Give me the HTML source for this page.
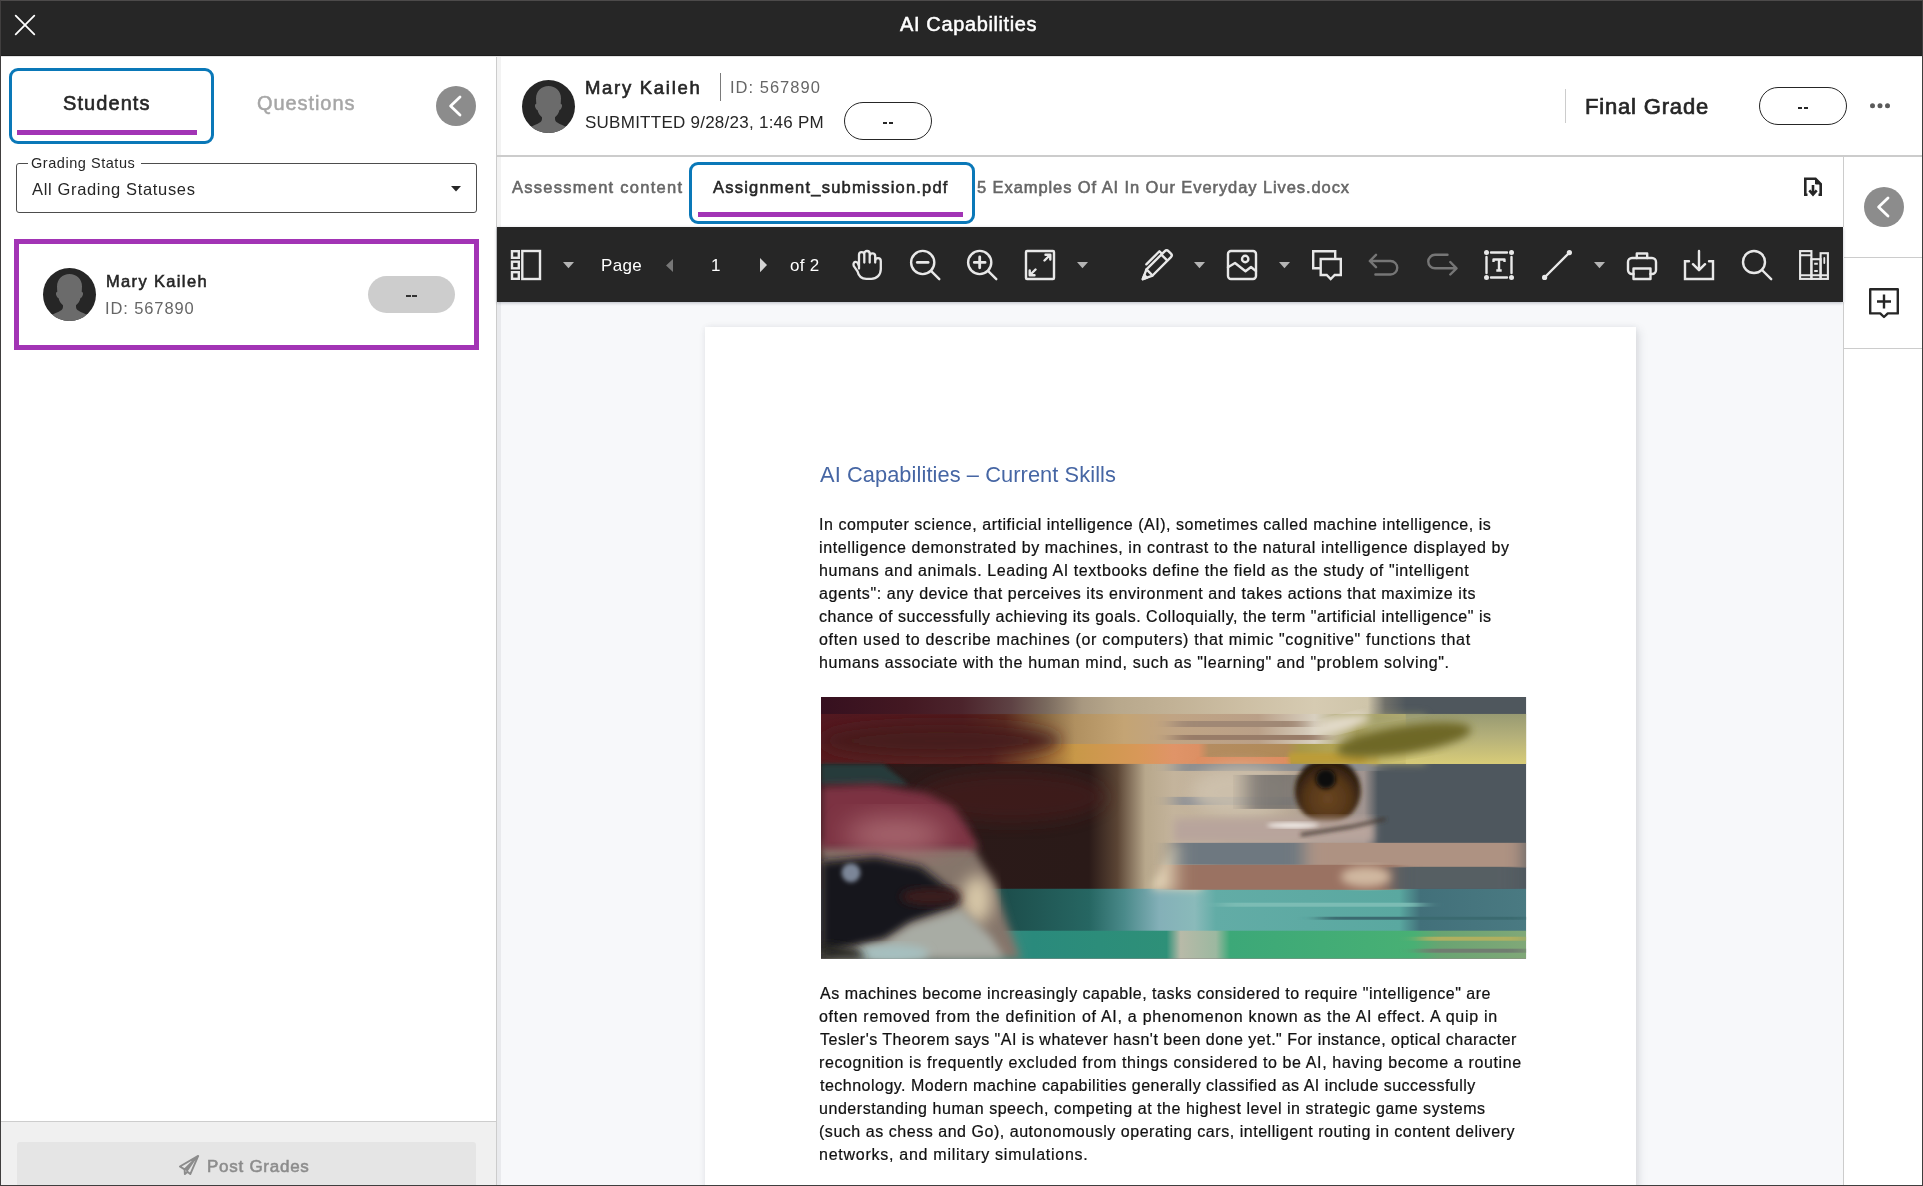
<!DOCTYPE html>
<html lang="en">
<head>
<meta charset="utf-8">
<title>AI Capabilities</title>
<style>
*{box-sizing:border-box;margin:0;padding:0}
html,body{width:1923px;height:1186px;overflow:hidden;background:#fff}
body{font-family:"Liberation Sans","DejaVu Sans",sans-serif;color:#262626;position:relative}
.a{position:absolute}
.t{position:absolute;white-space:pre;line-height:1;will-change:transform}
svg{position:absolute;overflow:visible}
.ic{fill:none;stroke:#e8e8e8;stroke-width:2.400;stroke-linecap:round;stroke-linejoin:round}
</style>
</head>
<body>

<div class="a" style="left:0;top:0;width:1923px;height:56px;background:#262626;border-bottom:1px solid #1b1b1b"></div>
<svg style="left:15px;top:15px" width="20" height="20" viewBox="0 0 20 20"><path d="M0.7 0.7L19.3 19.3M19.3 0.7L0.7 19.3" stroke="#fff" stroke-width="1.8" stroke-linecap="round"/></svg>
<div class="t" style="left:900.16px;top:13.97px;font-size:20px;color:#ffffff;letter-spacing:0.624px;-webkit-text-stroke:0.5px #ffffff;">AI Capabilities</div>
<div class="a" style="left:496px;top:56px;width:1px;height:1130px;background:#cccccc"></div>
<div class="a" style="left:497px;top:56px;width:4px;height:1130px;background:#f3f3f3"></div>
<div class="a" style="left:9px;top:68px;width:205px;height:76px;border:3px solid #0a78b8;border-radius:9px"></div>
<div class="a" style="left:17px;top:130px;width:180px;height:5px;background:#a234b5"></div>
<div class="t" style="left:63.10px;top:93.07px;font-size:20px;color:#262626;letter-spacing:1.075px;-webkit-text-stroke:0.62px #262626;">Students</div>
<div class="t" style="left:257.31px;top:93.07px;font-size:20px;color:#a6a6a6;letter-spacing:0.927px;-webkit-text-stroke:0.5px #a6a6a6;">Questions</div>
<div class="a" style="left:436px;top:86px;width:40px;height:40px;border-radius:50%;background:#8c8c8c"></div>
<svg style="left:436px;top:86px" width="40" height="40" viewBox="0 0 40 40"><path d="M24 11L14.6 20L24 29" fill="none" stroke="#fff" stroke-width="2.800" stroke-linecap="round" stroke-linejoin="round"/></svg>
<div class="a" style="left:16px;top:163px;width:461px;height:50px;border:1px solid #4d4d4d;border-radius:3px"></div>
<div class="a" style="left:28px;top:160px;width:113px;height:6px;background:#fff"></div>
<div class="t" style="left:31.15px;top:155.53px;font-size:14.5px;color:#262626;letter-spacing:0.544px;">Grading Status</div>
<div class="t" style="left:31.84px;top:180.93px;font-size:16.5px;color:#262626;letter-spacing:0.657px;">All Grading Statuses</div>
<svg style="left:451px;top:186px" width="10" height="6" viewBox="0 0 10 6"><path d="M0 0H10L5 5.5Z" fill="#262626"/></svg>
<div class="a" style="left:14px;top:239px;width:465px;height:111px;border:5px solid #a234b5"></div>
<svg style="left:43px;top:268px" width="53" height="53" viewBox="0 0 53 53"><defs><clipPath id="av1"><circle cx="26.5" cy="26.5" r="26.5"/></clipPath></defs><circle cx="26.5" cy="26.5" r="26.5" fill="#262626"/><g clip-path="url(#av1)" fill="#6b6b6b"><path d="M26.5 6C19.5 6 14 11 14 18.5c0 2 .2 3.600 .3 5.200c-1.200 .2-1.600 1.500-1.200 3c.5 2 1.400 3.200 2.400 3.400c.8 3 2.300 5.600 4.500 7.200c0 2.300 0 3.500-1.400 4.700C15.500 44.500 9 45 5 51.500L26.500 60L48 51.500c-4-6.500-10.500-7-13.600-9.500c-1.400-1.200-1.400-2.400-1.400-4.700c2.200-1.600 3.700-4.200 4.500-7.200c1-.2 1.900-1.400 2.400-3.400c.4-1.500 0-2.800-1.200-3c.1-1.600 .3-3.200 .3-5.200C39 11 33.500 6 26.500 6z"/></g></svg>
<div class="t" style="left:106.15px;top:272.83px;font-size:16.5px;color:#262626;letter-spacing:1.347px;-webkit-text-stroke:0.55px #262626;">Mary Kaileh</div>
<div class="t" style="left:105.25px;top:299.83px;font-size:16.5px;color:#666666;letter-spacing:0.885px;">ID: 567890</div>
<div class="a" style="left:368px;top:276px;width:87px;height:37px;border-radius:19px;background:#cdcdcd"></div>
<div class="a" style="left:406px;top:295px;width:4.600px;height:2.400px;background:#333"></div><div class="a" style="left:412px;top:295px;width:4.600px;height:2.400px;background:#333"></div>
<div class="a" style="left:1px;top:1121px;width:495px;height:65px;background:#f0f0f0;border-top:1px solid #cdcdcd"></div>
<div class="a" style="left:17px;top:1142px;width:459px;height:44px;background:#e5e5e5;border-radius:3px 3px 0 0"></div>
<div class="t" style="left:207.15px;top:1158.11px;font-size:17px;color:#8c8c8c;letter-spacing:0.735px;-webkit-text-stroke:0.55px #8c8c8c;">Post Grades</div>
<svg style="left:179px;top:1155px" width="20" height="20" viewBox="0 0 20 20"><path d="M19.200 0.900L0.900 11.500L5.600 14.400L19.200 0.900L11.300 19.100L8.400 16.700L5.900 19.100L5.600 14.400" fill="none" stroke="#8c8c8c" stroke-width="1.900" stroke-linejoin="round" stroke-linecap="round"/><path d="M19.200 0.900L5.600 14.400L8.400 16.700Z" fill="#8c8c8c"/></svg>
<div class="a" style="left:1px;top:56px;width:1921px;height:1px;background:#e2e2e2"></div>
<svg style="left:522px;top:80px" width="53" height="53" viewBox="0 0 53 53"><defs><clipPath id="av2"><circle cx="26.5" cy="26.5" r="26.5"/></clipPath></defs><circle cx="26.5" cy="26.5" r="26.5" fill="#262626"/><g clip-path="url(#av2)" fill="#6b6b6b"><path d="M26.5 6C19.5 6 14 11 14 18.5c0 2 .2 3.600 .3 5.200c-1.200 .2-1.600 1.500-1.200 3c.5 2 1.400 3.200 2.400 3.400c.8 3 2.300 5.600 4.500 7.200c0 2.300 0 3.500-1.400 4.700C15.500 44.500 9 45 5 51.500L26.500 60L48 51.500c-4-6.500-10.500-7-13.600-9.500c-1.400-1.200-1.400-2.400-1.400-4.700c2.200-1.600 3.700-4.200 4.500-7.200c1-.2 1.900-1.400 2.400-3.400c.4-1.500 0-2.800-1.200-3c.1-1.600 .3-3.200 .3-5.200C39 11 33.500 6 26.500 6z"/></g></svg>
<div class="t" style="left:585.15px;top:78.94px;font-size:18.5px;color:#262626;letter-spacing:1.711px;-webkit-text-stroke:0.62px #262626;">Mary Kaileh</div>
<div class="a" style="left:720px;top:73px;width:1px;height:28px;background:#7a7a7a"></div>
<div class="t" style="left:729.78px;top:79.03px;font-size:16.5px;color:#666666;letter-spacing:1.014px;">ID: 567890</div>
<div class="t" style="left:585.15px;top:113.51px;font-size:17px;color:#262626;letter-spacing:0.253px;">SUBMITTED 9/28/23, 1:46 PM</div>
<div class="a" style="left:844px;top:102px;width:88px;height:38px;border-radius:19px;border:1px solid #262626"></div>
<div class="a" style="left:883px;top:122px;width:4.400px;height:2.200px;background:#262626"></div><div class="a" style="left:888.800px;top:122px;width:4.400px;height:2.200px;background:#262626"></div>
<div class="a" style="left:1565px;top:89px;width:1px;height:34px;background:#cccccc"></div>
<div class="t" style="left:1585.36px;top:95.88px;font-size:22px;color:#262626;letter-spacing:0.827px;-webkit-text-stroke:0.7px #262626;">Final Grade</div>
<div class="a" style="left:1759px;top:87px;width:88px;height:38px;border-radius:19px;border:1px solid #262626"></div>
<div class="a" style="left:1798px;top:107px;width:4.400px;height:2.200px;background:#262626"></div><div class="a" style="left:1803.800px;top:107px;width:4.400px;height:2.200px;background:#262626"></div>
<svg style="left:1868px;top:100px" width="24" height="12" viewBox="0 0 24 12"><circle cx="4.500" cy="5.700" r="2.500" fill="#5a5a5a"/><circle cx="12" cy="5.700" r="2.500" fill="#5a5a5a"/><circle cx="19.500" cy="5.700" r="2.500" fill="#5a5a5a"/></svg>
<div class="a" style="left:497px;top:155px;width:1425px;height:2px;background:#cccccc"></div>
<div class="t" style="left:512.37px;top:179.03px;font-size:16.5px;color:#666666;letter-spacing:1.260px;-webkit-text-stroke:0.55px #666666;">Assessment content</div>
<div class="a" style="left:689px;top:162px;width:286px;height:62px;border:3px solid #0a78b8;border-radius:9px"></div>
<div class="a" style="left:698px;top:212px;width:265px;height:5px;background:#a234b5"></div>
<div class="t" style="left:713.00px;top:179.03px;font-size:16.5px;color:#262626;letter-spacing:1.208px;-webkit-text-stroke:0.55px #262626;">Assignment_submission.pdf</div>
<div class="t" style="left:977.15px;top:179.03px;font-size:16.5px;color:#666666;letter-spacing:0.911px;-webkit-text-stroke:0.55px #666666;">5 Examples Of AI In Our Everyday Lives.docx</div>
<svg style="left:1803px;top:177px" width="20" height="20" viewBox="0 0 20 20"><path d="M4.500 17.700H2.300V1.800H12.500L17.700 7V17.700H15.500" fill="none" stroke="#262626" stroke-width="2.600" stroke-linejoin="miter"/><path d="M12.500 1.800V7H17.700Z" fill="#262626" stroke="#262626" stroke-width="1"/><path d="M10 8V17M6.300 13.300L10 17.500L13.700 13.300" fill="none" stroke="#262626" stroke-width="2.600"/></svg>
<div class="a" style="left:1843px;top:157px;width:1px;height:70px;background:#cccccc"></div>
<div class="a" style="left:1843px;top:302px;width:1px;height:884px;background:#cccccc;z-index:3"></div>
<div class="a" style="left:1864px;top:187px;width:40px;height:40px;border-radius:50%;background:#8c8c8c"></div>
<svg style="left:1864px;top:187px" width="40" height="40" viewBox="0 0 40 40"><path d="M24 11L14.6 20L24 29" fill="none" stroke="#fff" stroke-width="2.800" stroke-linecap="round" stroke-linejoin="round"/></svg>
<div class="a" style="left:1844px;top:257px;width:78px;height:1px;background:#cccccc"></div>
<div class="a" style="left:1844px;top:348px;width:78px;height:1px;background:#cccccc"></div>
<svg style="left:1869px;top:288px" width="30" height="30" viewBox="0 0 30 30"><path d="M1.200 1.200H28.800V25.400H18.800L15 29L11.200 25.400H1.200Z" fill="none" stroke="#262626" stroke-width="2.400" stroke-linejoin="round"/><path d="M15 6.500V20.500M8 13.500H22" stroke="#262626" stroke-width="2.400" fill="none"/></svg>
<div class="a" style="left:497px;top:301px;width:1346px;height:885px;background:#f7f8fa"></div>
<div class="a" style="left:497px;top:301px;width:4px;height:885px;background:#e9eaed"></div>
<div class="a" style="left:497px;top:227px;width:1346px;height:75px;background:#262626;box-shadow:0 1px 3px rgba(40,50,70,.3)"></div>
<svg class="ic" style="left:511px;top:250px;stroke-linejoin:miter;" width="30" height="30" viewBox="0 0 30 30"><rect x="1" y="1.200" width="6.800" height="6.600"/><rect x="1" y="11.700" width="6.800" height="6.600"/><rect x="1" y="22.200" width="6.800" height="6.600"/><rect x="11.300" y="1" width="17.700" height="28"/></svg>
<svg style="left:563px;top:261.8px" width="11" height="6.2" viewBox="0 0 11 6.2"><path d="M0 0H11L5.500 6.200Z" fill="#b4b4b4"/></svg>
<div class="t" style="left:600.52px;top:256.61px;font-size:17px;color:#ffffff;letter-spacing:0.366px;">Page</div>
<svg style="left:665.500px;top:258.500px" width="7" height="13" viewBox="0 0 7 13"><path d="M7 0V13L0 6.500Z" fill="#777"/></svg>
<div class="t" style="left:710.94px;top:257.21px;font-size:17px;color:#ffffff;">1</div>
<svg style="left:760px;top:258px" width="7" height="14.200" viewBox="0 0 7 14.200"><path d="M0 0V14.200L7 7.100Z" fill="#d4d4d4"/></svg>
<div class="t" style="left:790.31px;top:256.61px;font-size:17px;color:#ffffff;letter-spacing:0.287px;">of 2</div>
<svg class="ic" style="left:852px;top:250px;" width="30" height="30" viewBox="0 0 30 30"><path d="M7 18.500V4.800a2.650 2.650 0 0 1 5.300 0V12.500M12.300 4.800V3.700a2.700 2.700 0 0 1 5.400 0V12.500M17.700 6.200a2.750 2.750 0 0 1 5.500 0V12.500M23.200 10.900a2.800 2.800 0 0 1 5.600 0V19c0 6-4 9.800-9.500 9.800h-5c-5 0-7.800-3-8.800-7.500L1.700 15.800c-.7-2.600 .5-3.700 1.500-3.900c1.200-.2 2.300 .4 2.900 1.900L7 16.500" stroke-width="2.300"/></svg>
<svg class="ic" style="left:910px;top:250px;" width="30" height="30" viewBox="0 0 30 30"><circle cx="12.700" cy="12.500" r="11.600"/><path d="M21 20.800L29.300 29.200"/><path d="M7.300 12.400H18.100" stroke-width="2.800"/></svg>
<svg class="ic" style="left:967px;top:250px;" width="30" height="30" viewBox="0 0 30 30"><circle cx="12.700" cy="12.500" r="11.600"/><path d="M21 20.800L29.300 29.200"/><path d="M7.300 12.400H18.100M12.700 7V17.800" stroke-width="2.800"/></svg>
<svg class="ic" style="left:1025px;top:250px;" width="30" height="30" viewBox="0 0 30 30"><rect x="1" y="1" width="28" height="28" rx="1"/><path d="M19.500 10.500L25 5M20.500 4.700H25.300V9.500M10.500 19.500L5 25M4.700 20.500V25.300H9.500"/></svg>
<svg style="left:1077px;top:261.8px" width="11" height="6.2" viewBox="0 0 11 6.2"><path d="M0 0H11L5.500 6.200Z" fill="#b4b4b4"/></svg>
<svg class="ic" style="left:1142px;top:250px;" width="30" height="30" viewBox="0 0 30 30"><g transform="translate(0.8,29.2) rotate(-45)"><path d="M0 0L9.500-4.300V4.300Z"/><path d="M0 0L4-1.800V1.800Z" fill="#e8e8e8"/><path d="M9.500-4.300H35.500a2.500 2.500 0 0 1 2.500 2.500V1.800a2.500 2.500 0 0 1-2.500 2.500H9.500M30.500-4.300V4.300M13-8H31.500V-4.300"/></g></svg>
<svg style="left:1194px;top:261.8px" width="11" height="6.2" viewBox="0 0 11 6.2"><path d="M0 0H11L5.500 6.200Z" fill="#b4b4b4"/></svg>
<svg class="ic" style="left:1227px;top:250px;" width="30" height="30" viewBox="0 0 30 30"><rect x="1" y="1" width="28" height="28" rx="3"/><circle cx="18.200" cy="9" r="3.200"/><path d="M1 17.300L8 13L18.500 21.200L24 17L29 21.200"/></svg>
<svg style="left:1279px;top:261.8px" width="11" height="6.2" viewBox="0 0 11 6.2"><path d="M0 0H11L5.500 6.200Z" fill="#b4b4b4"/></svg>
<svg class="ic" style="left:1312px;top:250px;stroke-linejoin:miter;" width="30" height="30" viewBox="0 0 30 30"><path d="M7.200 18.200H1.200V1.200H23.200V7.500"/><path d="M8.700 9H28.800V25H22.700L18.700 29L14.700 25H8.700Z"/></svg>
<svg class="ic" style="left:1369px;top:250px;stroke:#767676;" width="30" height="30" viewBox="0 0 30 30"><path d="M7 4.800L0.800 11L7 17.200M1.500 11H21.500a6.750 6.750 0 0 1 0 13.500H6.400"/></svg>
<svg class="ic" style="left:1426.5px;top:250px;stroke:#767676;" width="30" height="30" viewBox="0 0 30 30"><path d="M20.500 4.800H8a6.750 6.750 0 0 0 0 13.500H28.500M23.300 12L29.500 18.300L23.300 24.500"/></svg>
<svg class="ic" style="left:1484px;top:250px;" width="30" height="30" viewBox="0 0 30 30"><path d="M7 2.500H23M7 27.500H23M2.500 7V23M27.500 7V23"/><g fill="#e8e8e8" stroke="none"><circle cx="2.500" cy="2.500" r="2.500"/><circle cx="27.500" cy="2.500" r="2.500"/><circle cx="2.500" cy="27.500" r="2.500"/><circle cx="27.500" cy="27.500" r="2.500"/></g><path d="M9.500 12V9.500H20.500V12M15 9.500V20.500M12.300 20.500H17.700" stroke-width="2.400" stroke-linecap="butt"/></svg>
<svg class="ic" style="left:1542px;top:250px;" width="30" height="30" viewBox="0 0 30 30"><path d="M3 27L27 3" stroke-width="2.400"/><g fill="#e8e8e8" stroke="none"><circle cx="2.600" cy="27.400" r="2.600"/><circle cx="27.400" cy="2.600" r="2.600"/></g></svg>
<svg style="left:1594px;top:261.8px" width="11" height="6.2" viewBox="0 0 11 6.2"><path d="M0 0H11L5.500 6.200Z" fill="#b4b4b4"/></svg>
<svg class="ic" style="left:1627px;top:250px;" width="30" height="30" viewBox="0 0 30 30"><path d="M9.800 8V3.500H20.200V8"/><path d="M6.500 24H5a4 4 0 0 1-4-4V12a4 4 0 0 1 4-4H25a4 4 0 0 1 4 4V20a4 4 0 0 1-4 4H23.500"/><rect x="6.500" y="18.500" width="17" height="10.500"/></svg>
<svg class="ic" style="left:1684px;top:250px;" width="30" height="30" viewBox="0 0 30 30"><path d="M5 11.200H1V29H29V11.200H25" stroke-linejoin="miter"/><path d="M15 1V19.500M9 14.200L15 20.200L21 14.200"/></svg>
<svg class="ic" style="left:1742px;top:250px;" width="30" height="30" viewBox="0 0 30 30"><circle cx="12" cy="12" r="11"/><path d="M20 20L29.200 29.200"/></svg>
<svg class="ic" style="left:1799px;top:250px;stroke-linejoin:miter;stroke-width:2.100;" width="30" height="30" viewBox="0 0 30 30"><rect x="1.100" y="1.100" width="11.300" height="27.800"/><rect x="12.400" y="9.200" width="9.200" height="19.700"/><rect x="21.600" y="3.200" width="7.300" height="25.700"/><path d="M1.100 5.300H12.400M1.100 25.200H28.900M15.200 13.800H18.800M15.200 21H18.800" stroke-linecap="butt"/><path d="M25.300 8V13" stroke-width="1.800"/></svg>
<div class="a" style="left:705px;top:327px;width:931px;height:870px;background:#fff;box-shadow:3px 3px 9px rgba(50,55,70,.13),0 0 6px rgba(50,55,70,.06)"></div>
<div class="t" style="left:820.00px;top:463.55px;font-size:21.8px;color:#4666a4;letter-spacing:0.088px;">AI Capabilities – Current Skills</div>
<div class="t" style="left:819.10px;top:517.46px;font-size:16px;color:#111111;letter-spacing:0.532px;-webkit-text-stroke:0.22px #111111;">In computer science, artificial intelligence (AI), sometimes called machine intelligence, is</div>
<div class="t" style="left:819.10px;top:540.46px;font-size:16px;color:#111111;letter-spacing:0.612px;-webkit-text-stroke:0.22px #111111;">intelligence demonstrated by machines, in contrast to the natural intelligence displayed by</div>
<div class="t" style="left:819.10px;top:563.46px;font-size:16px;color:#111111;letter-spacing:0.586px;-webkit-text-stroke:0.22px #111111;">humans and animals. Leading AI textbooks define the field as the study of "intelligent</div>
<div class="t" style="left:819.10px;top:586.46px;font-size:16px;color:#111111;letter-spacing:0.562px;-webkit-text-stroke:0.22px #111111;">agents": any device that perceives its environment and takes actions that maximize its</div>
<div class="t" style="left:819.10px;top:609.46px;font-size:16px;color:#111111;letter-spacing:0.522px;-webkit-text-stroke:0.22px #111111;">chance of successfully achieving its goals. Colloquially, the term "artificial intelligence" is</div>
<div class="t" style="left:819.10px;top:632.46px;font-size:16px;color:#111111;letter-spacing:0.679px;-webkit-text-stroke:0.22px #111111;">often used to describe machines (or computers) that mimic "cognitive" functions that</div>
<div class="t" style="left:819.10px;top:655.46px;font-size:16px;color:#111111;letter-spacing:0.624px;-webkit-text-stroke:0.22px #111111;">humans associate with the human mind, such as "learning" and "problem solving".</div>
<svg style="left:820.8px;top:696.8px" width="705.2" height="261.7" viewBox="0 0 705.5 262" preserveAspectRatio="none">
<defs>
<clipPath id="ic"><rect width="705.5" height="262"/></clipPath><clipPath id="ir"><rect x="400" y="67" width="200" height="100"/></clipPath>
<filter id="b2" x="-20%" y="-20%" width="140%" height="140%"><feGaussianBlur stdDeviation="2"/></filter>
<filter id="b4" x="-20%" y="-20%" width="140%" height="140%"><feGaussianBlur stdDeviation="4"/></filter>
<filter id="b8" x="-30%" y="-30%" width="160%" height="160%"><feGaussianBlur stdDeviation="8"/></filter>
<filter id="b14" x="-40%" y="-40%" width="180%" height="180%"><feGaussianBlur stdDeviation="14"/></filter>
<filter id="bh" x="-20%" y="-5%" width="140%" height="110%"><feGaussianBlur stdDeviation="10 0.6"/></filter>
<linearGradient id="gA" x1="0" x2="1" y1="0" y2="0">
<stop offset="0" stop-color="#36101f"/><stop offset=".12" stop-color="#431822"/><stop offset=".2" stop-color="#4c242c"/><stop offset=".27" stop-color="#5e4244"/><stop offset=".32" stop-color="#7a6a5e"/><stop offset=".37" stop-color="#a89880"/><stop offset=".42" stop-color="#b8a88c"/><stop offset=".5" stop-color="#c2b296"/><stop offset=".6" stop-color="#cdbfa4"/><stop offset=".7" stop-color="#d6cbb2"/><stop offset=".775" stop-color="#cfc5aa"/><stop offset=".8" stop-color="#70706a"/><stop offset=".83" stop-color="#4f575d"/><stop offset="1" stop-color="#4f575d"/>
</linearGradient>
<linearGradient id="gB" x1="0" x2="1" y1="0" y2="0">
<stop offset="0" stop-color="#531820"/><stop offset=".2" stop-color="#4e1a1d"/><stop offset=".26" stop-color="#5a2a20"/><stop offset=".31" stop-color="#80603c"/><stop offset=".36" stop-color="#b09060"/><stop offset=".43" stop-color="#c4a474"/><stop offset=".5" stop-color="#c0a484"/><stop offset=".62" stop-color="#baa088"/><stop offset=".7" stop-color="#d8d0c0"/><stop offset=".76" stop-color="#a8a060"/><stop offset=".9" stop-color="#c8c080"/><stop offset="1" stop-color="#d8d08c"/>
</linearGradient>
<linearGradient id="gB2" x1="0" x2="1" y1="0" y2="0">
<stop offset="0" stop-color="#561a1e"/><stop offset=".24" stop-color="#5a2420"/><stop offset=".3" stop-color="#8a5a30"/><stop offset=".36" stop-color="#c89848"/><stop offset=".45" stop-color="#d89858"/><stop offset=".5" stop-color="#e09468"/><stop offset=".535" stop-color="#dc9064"/><stop offset=".55" stop-color="#b48c60"/><stop offset=".66" stop-color="#b08a58"/><stop offset=".68" stop-color="#a89848"/><stop offset=".8" stop-color="#c4b868"/><stop offset="1" stop-color="#dcd080"/>
</linearGradient>
<linearGradient id="gD" x1="0" x2="1" y1="0" y2="0">
<stop offset="0" stop-color="#1c2c2c"/><stop offset=".25" stop-color="#1c4c4a"/><stop offset=".38" stop-color="#266662"/><stop offset=".43" stop-color="#4a8a8a"/><stop offset=".48" stop-color="#84b0b8"/><stop offset=".53" stop-color="#8ababa"/><stop offset=".56" stop-color="#62aca6"/><stop offset=".82" stop-color="#5aa8a0"/><stop offset=".85" stop-color="#42707a"/><stop offset="1" stop-color="#4a7a82"/>
</linearGradient>
<linearGradient id="gE" x1="0" x2="1" y1="0" y2="0">
<stop offset="0" stop-color="#101214"/><stop offset=".2" stop-color="#4a8a84"/><stop offset=".3" stop-color="#2a8a7c"/><stop offset=".49" stop-color="#2e9078"/><stop offset=".51" stop-color="#b8baa8"/><stop offset=".56" stop-color="#9cb8a0"/><stop offset=".58" stop-color="#3ca878"/><stop offset=".84" stop-color="#48b074"/><stop offset=".88" stop-color="#6aa472"/><stop offset="1" stop-color="#80a878"/>
</linearGradient>
<linearGradient id="gC" x1="0" x2="1" y1="0" y2="0">
<stop offset="0" stop-color="#2c1a1a"/><stop offset=".38" stop-color="#2a1a18"/><stop offset=".42" stop-color="#5a4434"/><stop offset=".46" stop-color="#b8a88c"/><stop offset=".5" stop-color="#c4b49c"/><stop offset=".66" stop-color="#b8a896"/><stop offset=".77" stop-color="#a09490"/><stop offset=".79" stop-color="#4e575e"/><stop offset="1" stop-color="#4e575e"/>
</linearGradient>
<linearGradient id="gY" x1="0" x2="0" y1="0" y2="1"><stop offset="0" stop-color="#989a72"/><stop offset=".45" stop-color="#b4b07a"/><stop offset="1" stop-color="#d8cc78"/></linearGradient>
<radialGradient id="gI" cx=".5" cy=".62" r=".6"><stop offset="0" stop-color="#6a4622"/><stop offset=".55" stop-color="#553618"/><stop offset="1" stop-color="#1e140c"/></radialGradient>
</defs>
<g clip-path="url(#ic)">
<rect width="705.5" height="262" fill="#2c1a1a"/>
<rect y="66" width="705.5" height="127" fill="url(#gC)"/>
<rect width="705.5" height="17.500" fill="url(#gA)"/>
<rect y="17" width="705.5" height="32" fill="url(#gB)"/>
<rect y="47" width="705.5" height="20" fill="url(#gB2)"/>
<rect y="192" width="705.5" height="43" fill="url(#gD)"/>
<rect y="234" width="705.5" height="28" fill="url(#gE)"/>
<!-- band B details -->
<rect x="376" y="60" width="94" height="7" fill="#de8e62"/>
<rect x="468" y="56" width="90" height="11" fill="#bc9c38" filter="url(#b2)"/>
<rect x="585" y="17" width="121" height="50" fill="url(#gY)"/>
<rect x="545" y="17" width="60" height="50" fill="url(#gY)" opacity=".55" filter="url(#b4)"/>
<ellipse cx="120" cy="44" rx="120" ry="16" fill="#461c1a" filter="url(#b8)"/>
<ellipse cx="583" cy="43" rx="68" ry="14" transform="rotate(-9 583 43)" fill="#6e6828" filter="url(#b4)"/>
<ellipse cx="520" cy="27" rx="30" ry="7" transform="rotate(-14 520 27)" fill="#e4dccc" filter="url(#b4)"/>
<rect x="353" y="24" width="130" height="6" fill="#a08874" filter="url(#bh)"/>
<rect x="353" y="38" width="150" height="5" fill="#987c68" filter="url(#bh)"/>
<!-- band C left -->
<path d="M0 67H62L88 88H0Z" fill="#263a3b" filter="url(#b2)"/>
<ellipse cx="190" cy="100" rx="95" ry="26" fill="#481a1c" opacity=".6" filter="url(#b8)"/>
<path d="M0 146H150L176 192L186 225L200 262H0Z" fill="#85756a" filter="url(#b4)"/>
<path d="M0 89L55 87L105 96L132 110L148 132L158 152H0Z" fill="#7c3042" filter="url(#b4)"/>
<ellipse cx="75" cy="138" rx="52" ry="17" fill="#aa6a72" filter="url(#b14)"/>
<ellipse cx="156" cy="203" rx="15" ry="24" fill="#d8c8a8" filter="url(#b8)"/>
<path d="M0 165L55 160L100 170L132 195L138 209L90 226L64 243L0 258Z" fill="#16141a" filter="url(#b4)"/>
<ellipse cx="110" cy="200" rx="30" ry="9" fill="#3a1a1c" filter="url(#b4)"/>
<path d="M0 260L64 245L90 228L140 212L170 240L184 262H0Z" fill="#a8aca4" filter="url(#b4)"/>
<ellipse cx="72" cy="257" rx="36" ry="9" fill="#a6c0c0" filter="url(#b4)"/>
<path d="M0 246L36 252L46 262H0Z" fill="#262624" filter="url(#b4)"/>
<circle cx="30" cy="176" r="9.500" fill="#7c8698" filter="url(#b2)"/>
<!-- band C right -->
<path d="M330 192L353 150H400L380 192Z" fill="#e4d6b8" filter="url(#b4)"/>
<rect x="353" y="67" width="200" height="7" fill="#8c8e90" filter="url(#bh)"/>
<rect x="353" y="100" width="120" height="8" fill="#8a8e94" filter="url(#bh)"/>
<ellipse cx="420" cy="95" rx="50" ry="26" fill="#d0c4b0" opacity=".8" filter="url(#b8)"/>
<rect x="425" y="78" width="60" height="34" fill="#6a6866" opacity=".75" filter="url(#bh)"/>
<g clip-path="url(#ir)"><circle cx="507" cy="94" r="33" fill="url(#gI)" filter="url(#b2)"/><circle cx="505" cy="82" r="10" fill="#0e0a08" filter="url(#b2)"/></g>
<rect x="353" y="122" width="200" height="24" fill="#b8a49c" filter="url(#b4)"/>
<ellipse cx="472" cy="128.500" rx="26" ry="2.600" fill="#f4f0ec" filter="url(#b2)"/>
<path d="M480 138L530 130L565 122" stroke="#40362e" stroke-width="3" fill="none" filter="url(#b2)"/>
<rect x="353" y="146" width="140" height="22" fill="#6e7880" filter="url(#bh)"/>
<rect x="486" y="146" width="220" height="25" fill="#ae9282" filter="url(#bh)"/>
<rect x="353" y="168" width="225" height="25" fill="#9a7262" filter="url(#bh)"/>
<rect x="575" y="170" width="125" height="22" fill="#565e64" filter="url(#bh)"/>
<ellipse cx="545" cy="180" rx="25" ry="10" fill="#d0b8a0" filter="url(#b4)"/>
<!-- band D/E streaks -->
<rect x="500" y="220" width="206" height="3" fill="#3a6a70" filter="url(#bh)"/>
<rect x="400" y="206" width="200" height="4" fill="#7cbcb4" filter="url(#bh)"/>
<rect x="600" y="240" width="106" height="4" fill="#b0b060" filter="url(#bh)"/>
<rect x="600" y="252" width="106" height="4" fill="#707c70" filter="url(#bh)"/>
</g>
</svg>

<div class="t" style="left:820.00px;top:986.26px;font-size:16px;color:#111111;letter-spacing:0.508px;-webkit-text-stroke:0.22px #111111;">As machines become increasingly capable, tasks considered to require "intelligence" are</div>
<div class="t" style="left:819.10px;top:1009.26px;font-size:16px;color:#111111;letter-spacing:0.722px;-webkit-text-stroke:0.22px #111111;">often removed from the definition of AI, a phenomenon known as the AI effect. A quip in</div>
<div class="t" style="left:820.00px;top:1032.26px;font-size:16px;color:#111111;letter-spacing:0.496px;-webkit-text-stroke:0.22px #111111;">Tesler's Theorem says "AI is whatever hasn't been done yet." For instance, optical character</div>
<div class="t" style="left:819.10px;top:1055.26px;font-size:16px;color:#111111;letter-spacing:0.616px;-webkit-text-stroke:0.22px #111111;">recognition is frequently excluded from things considered to be AI, having become a routine</div>
<div class="t" style="left:820.00px;top:1078.26px;font-size:16px;color:#111111;letter-spacing:0.488px;-webkit-text-stroke:0.22px #111111;">technology. Modern machine capabilities generally classified as AI include successfully</div>
<div class="t" style="left:819.10px;top:1101.26px;font-size:16px;color:#111111;letter-spacing:0.545px;-webkit-text-stroke:0.22px #111111;">understanding human speech, competing at the highest level in strategic game systems</div>
<div class="t" style="left:819.10px;top:1124.26px;font-size:16px;color:#111111;letter-spacing:0.537px;-webkit-text-stroke:0.22px #111111;">(such as chess and Go), autonomously operating cars, intelligent routing in content delivery</div>
<div class="t" style="left:819.10px;top:1147.26px;font-size:16px;color:#111111;letter-spacing:0.737px;-webkit-text-stroke:0.22px #111111;">networks, and military simulations.</div>
<div class="a" style="left:0;top:0;width:1923px;height:1186px;border:1px solid #403e3e;border-top-color:#4c4a4a;z-index:9"></div>
</body>
</html>
